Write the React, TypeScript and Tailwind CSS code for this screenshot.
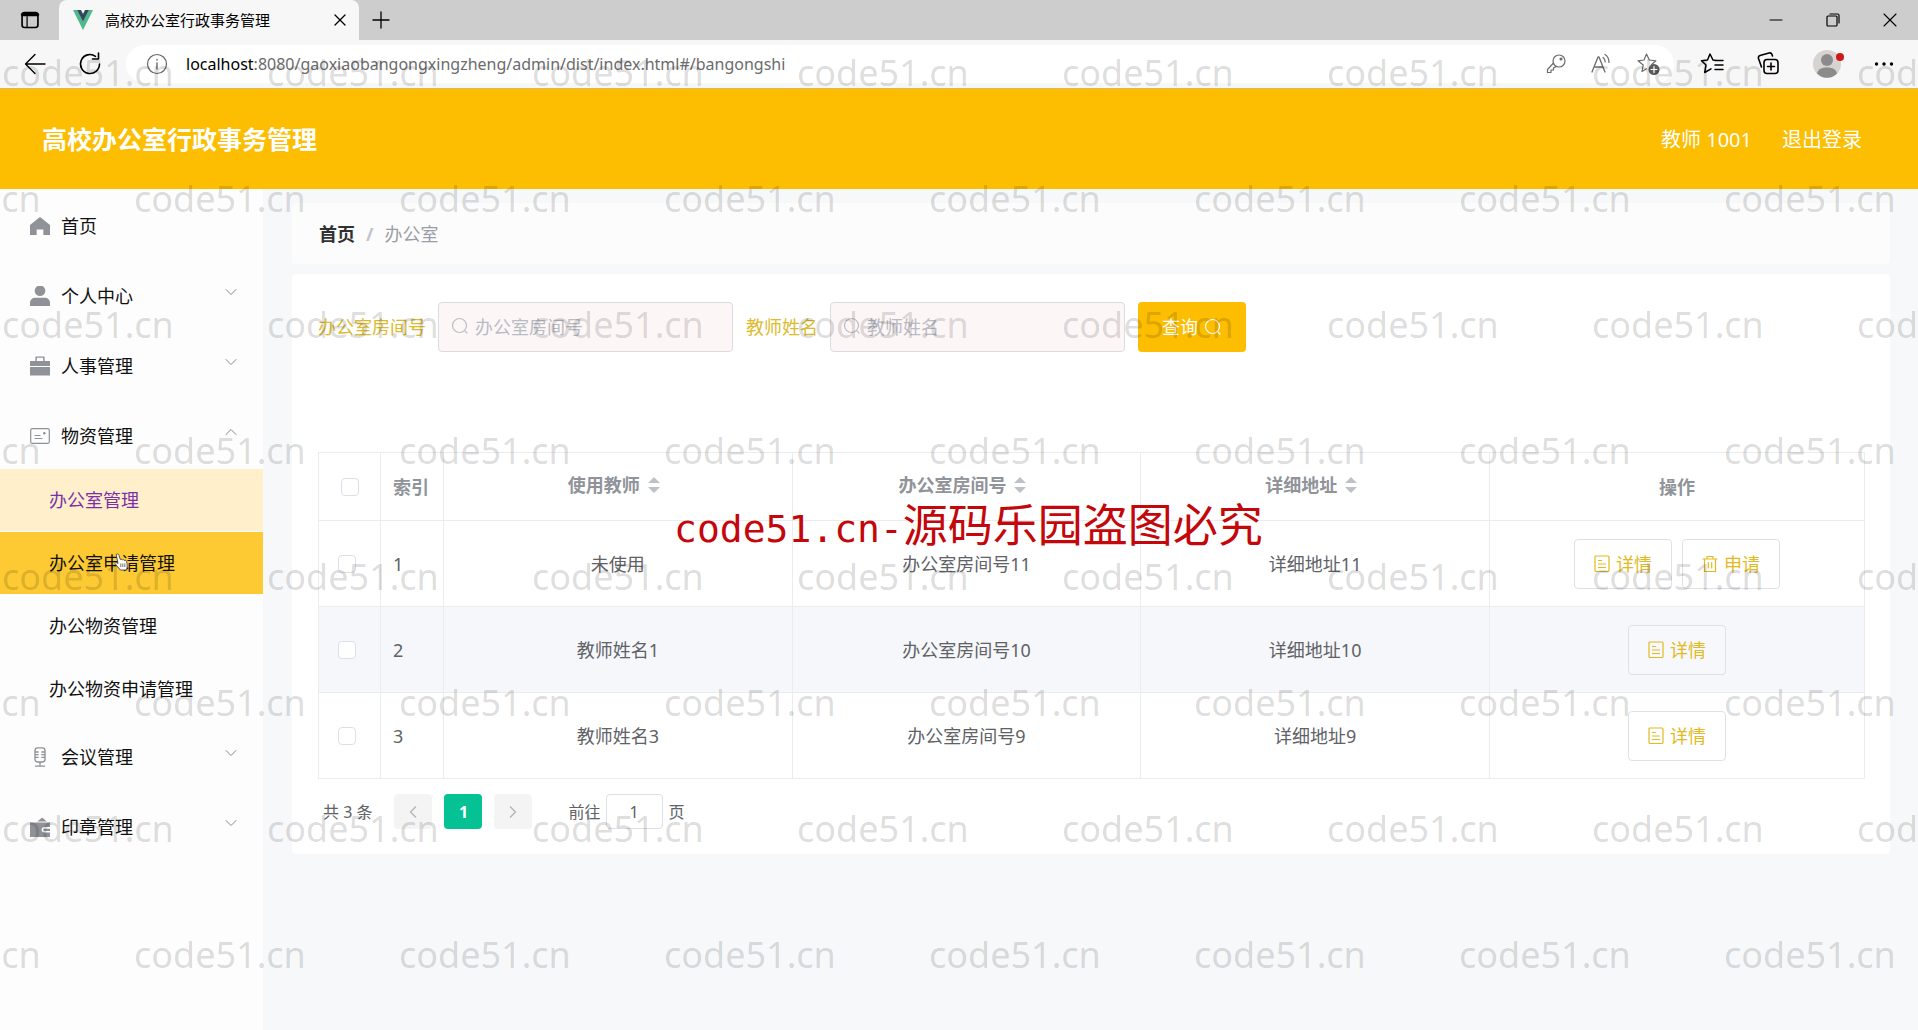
import type { ReactNode } from "react";

type IconProps = { className?: string };

const WATERMARK = "code51.cn";

function Svg({ className = "", children, box = "0 0 24 24" }: IconProps & { children: ReactNode; box?: string }) {
  return (
    <svg viewBox={box} className={className} fill="none" stroke="currentColor" strokeWidth="1.5" strokeLinecap="round" strokeLinejoin="round" aria-hidden="true">
      {children}
    </svg>
  );
}

const SearchIcon = ({ className }: IconProps) => (
  <Svg className={className} box="0 0 18 18">
    <circle cx="8.5" cy="8.5" r="7" strokeWidth="1.2" />
    <path d="M13.6 13.6 16 16" strokeWidth="1.2" />
  </Svg>
);

const Chevron = ({ className }: IconProps) => (
  <Svg className={className} box="0 0 12 12">
    <path d="m1 3.5 5 5 5-5" strokeWidth="1" />
  </Svg>
);

const PageArrow = ({ className }: IconProps) => (
  <Svg className={className} box="0 0 12 12">
    <path d="m1 3.5 5 5 5-5" strokeWidth="1.5" />
  </Svg>
);

const HomeIcon = ({ className }: IconProps) => (
  <Svg className={className} box="0 0 18 18">
    <path d="M9 .8 0 8v9.2h6v-5h6v5h6V8Z" fill="currentColor" stroke="none" />
  </Svg>
);

const UserIcon = ({ className }: IconProps) => (
  <Svg className={className} box="0 0 18 18">
    <g fill="currentColor" stroke="none">
      <circle cx="9" cy="4.3" r="4.8" />
      <path d="M0 18v-3a4.5 4.5 0 0 1 4.500-4.500h9A4.500 4.500 0 0 1 18 15v3Z" />
    </g>
  </Svg>
);

const CaseIcon = ({ className }: IconProps) => (
  <Svg className={className} box="0 0 18 18">
    <path d="M5.500 4V1h7v3" strokeWidth="1.300" />
    <path d="M0 4.500h18V9H0Zm0 5.500h18v7.500H0Z" fill="currentColor" stroke="none" />
  </Svg>
);

const CardIcon = ({ className }: IconProps) => (
  <Svg className={className} box="0 0 20 18">
    <rect x=".7" y="1.700" width="18.600" height="14.600" rx="1.500" strokeWidth="1.200" />
    <path d="M5 8.500h5M5 11.500h7" strokeWidth="1.200" />
    <circle cx="14.300" cy="6.300" r="1.300" fill="currentColor" stroke="none" />
  </Svg>
);

const MicIcon = ({ className }: IconProps) => (
  <Svg className={className} box="0 0 18 22">
    <rect x="3.500" y="1" width="11" height="15.500" rx="3" strokeWidth="1.500" />
    <path d="M4 5.500h3m4 0h3M4 8.500h3m4 0h3M4 11.500h3m4 0h3M9 17v3.500M4 21h10" strokeWidth="1.400" />
  </Svg>
);

const WalletIcon = ({ className }: IconProps) => (
  <Svg className={className} box="0 0 18 18">
    <path
      fillRule="evenodd"
      d="M0 5h18v4h-5a2.500 2.500 0 0 0 0 5h5v4H0ZM13 10.500h5v2h-5a1 1 0 0 1 0-2Z"
      fill="currentColor"
      stroke="none"
    />
    <path d="M6.500 4 11 .500 15 4Z" fill="currentColor" stroke="none" />
  </Svg>
);

const DocIcon = ({ className }: IconProps) => (
  <Svg className={className} box="0 0 16 18">
    <rect x="1" y="1" width="14" height="15.500" rx="1" strokeWidth="1.200" />
    <path d="M4.500 5.500h3M4.500 9h7M4.500 12.500h7" strokeWidth="1.200" />
  </Svg>
);

const TrashIcon = ({ className }: IconProps) => (
  <Svg className={className} box="0 0 16 18">
    <path d="M1 4h14M5 4V1.500h6V4M2.500 4v12.500h11V4M6.300 7.500v5.500M9.700 7.500v5.500" strokeWidth="1.200" />
  </Svg>
);

const VueLogo = ({ className }: IconProps) => (
  <svg viewBox="0 0 20 20" className={className} aria-hidden="true">
    <path d="M0 0h4l6 11 6-11h4L10 20Z" fill="#4fb98a" />
    <path d="M4 0h4l2 4 2-4h4L10 11.500Z" fill="#2f4a5c" />
  </svg>
);

const HandCursor = () => (
  <svg viewBox="0 0 14 18" className="pointer-events-none absolute left-[114px] top-[21px] h-[18px] w-[14px]" aria-hidden="true">
    <path
      d="M2.200 1.600C3.300.3 4.600 1 5 2.300L6.300 6.500c.9-.6 1.700-.3 2.100.4.900-.6 1.700-.2 2 .5 1.200-.4 1.900.2 2.200 1.200l.6 3c.3 1.900-.3 3.300-.5 5.400H6.300C4.800 14.500 2.500 12.800.8 10.400c.8-1.300 2.100-.9 3.300.2Z"
      fill="#fff"
      stroke="#333"
      strokeWidth=".8"
      strokeLinejoin="round"
    />
    <path d="M6.800 10.500v3.500M8.800 10.500v3.500M10.800 10.500v3.500" stroke="#333" strokeWidth=".7" />
  </svg>
);

function BrowserChrome() {
  return (
    <div className="text-black">
      <div className="flex h-10 items-stretch bg-[#cdcdcd]">
        <button aria-label="标签页操作" className="flex w-[59px] items-center justify-center rounded-br-lg">
          <Svg className="size-5">
            <rect x="2.500" y="3" width="19" height="18" rx="3" strokeWidth="2" />
            <path d="M3 5.500h18" strokeWidth="4" />
            <path d="M8.500 8v13" strokeWidth="1.500" />
          </Svg>
        </button>
        <div className="flex w-[300px] items-center rounded-t-lg bg-[#f7f7f7] pl-[14px] pr-2">
          <VueLogo className="h-5 w-5" />
          <span className="ml-3 text-[15px] leading-5">高校办公室行政事务管理</span>
          <button aria-label="关闭标签页" className="ml-auto p-1">
            <Svg className="size-[14px]" box="0 0 14 14">
              <path d="m2 2 10 10M12 2 2 12" strokeWidth="1.300" />
            </Svg>
          </button>
        </div>
        <button aria-label="新建标签页" className="flex w-11 items-center justify-center">
          <Svg className="size-[18px]" box="0 0 18 18">
            <path d="M9 1v16M1 9h16" strokeWidth="1.300" />
          </Svg>
        </button>
        <div className="ml-auto flex items-center">
          <button aria-label="最小化" className="flex w-[57px] justify-center">
            <Svg className="size-[14px]" box="0 0 14 14"><path d="M1 7h12" strokeWidth="1.200" /></Svg>
          </button>
          <button aria-label="还原" className="flex w-[57px] justify-center">
            <Svg className="size-[14px]" box="0 0 14 14">
              <rect x="1" y="3" width="10" height="10" rx="1" strokeWidth="1.200" />
              <path d="M4 1h7.500A1.500 1.500 0 0 1 13 2.500V10" strokeWidth="1.200" />
            </Svg>
          </button>
          <button aria-label="关闭" className="flex w-[57px] justify-center">
            <Svg className="size-[14px]" box="0 0 14 14"><path d="m1 1 12 12M13 1 1 13" strokeWidth="1.100" /></Svg>
          </button>
        </div>
      </div>
      <div className="flex h-12 items-center bg-[#f7f7f7]">
        <button aria-label="后退" className="ml-6">
          <Svg className="size-[22px]" box="0 0 22 22"><path d="M11 1.500 1.500 11l9.500 9.500M1.500 11H21" strokeWidth="1.400" /></Svg>
        </button>
        <button aria-label="刷新" className="ml-8">
          <Svg className="size-6"><path d="M21.500 12A9.500 9.500 0 1 1 17.500 4.300M20.500 1v6h-6" strokeWidth="1.600" /></Svg>
        </button>
        <div className="ml-6 flex h-[38px] min-w-0 flex-1 items-center rounded-full bg-white pl-5 pr-[14px]">
          <Svg className="size-[22px] shrink-0 text-[#666]" box="0 0 22 22">
            <circle cx="11" cy="11" r="9.500" strokeWidth="1.200" />
            <path d="M11 10v6M11 6.500v.5" strokeWidth="1.400" />
          </Svg>
          <p className="ml-[18px] flex-1 whitespace-nowrap text-base leading-6 text-[#6b6b6b]">
            <span className="text-black">localhost</span>:8080/gaoxiaobangongxingzheng/admin/dist/index.html#/bangongshi
          </p>
          <div className="flex items-center gap-6 text-[#6b6b6b]">
            <button aria-label="密码">
              <Svg className="size-5" box="0 0 20 20">
                <circle cx="13" cy="7" r="6" strokeWidth="1.200" />
                <circle cx="15" cy="5" r=".8" fill="currentColor" />
                <path d="M7.500 9 1.500 15.500v3h3.500v-2.500h2.500v-2l2.500-1.500" strokeWidth="1.200" />
              </Svg>
            </button>
            <button aria-label="朗读此页">
              <Svg className="size-[22px]" box="0 0 22 22">
                <path d="m2 19 6-15h1l6 15M4.300 14h8.400" strokeWidth="1.300" />
                <path d="M13 4.500c1.500 1 2.200 2.500 2.200 4.500M15 1.500c2.700 1.700 4 4.300 4 8" strokeWidth="1.200" />
              </Svg>
            </button>
            <button aria-label="收藏此页">
              <Svg className="size-6">
                <path d="m10.500 2 2.800 6 6.600.8-4.500 4M6 19.500l1.200-6.500L2 8.800l6-.8 2.500-6M6 19.500l4.500-2.700" strokeWidth="1.200" />
                <circle cx="18" cy="17.500" r="5.500" fill="#5c5c5c" stroke="none" />
                <path d="M18 14.500v6M15 17.500h6" stroke="#fff" strokeWidth="1.200" />
              </Svg>
            </button>
          </div>
        </div>
        <div className="flex items-center pl-[26px] pr-6">
          <button aria-label="收藏夹">
            <Svg className="size-6">
              <path d="M16.500 8.500 13 8 10 2 7.500 8l-6 .8L6 13l-1.300 7.500 6.300-3.700M15 8.500h8M15 13h8M15 17.500h8" strokeWidth="1.500" />
            </Svg>
          </button>
          <button aria-label="集锦" className="ml-8">
            <Svg className="size-6">
              <rect x="8" y="7.500" width="14" height="14" rx="3" strokeWidth="1.600" />
              <path d="M15 11v7M11.500 14.500h7M5.500 15 2.500 6.500a2.500 2.500 0 0 1 1.500-3l9-2.500a2.500 2.500 0 0 1 3 1.500l.5 1.500" strokeWidth="1.600" />
            </Svg>
          </button>
          <button aria-label="用户配置" className="relative ml-8">
            <svg viewBox="0 0 30 30" className="size-[30px]" aria-hidden="true">
              <circle cx="15" cy="15" r="14" fill="#d6d3d1" />
              <circle cx="15" cy="11" r="6" fill="#8b8b8b" />
              <path d="M5 24.500C6 20 10 18.500 15 18.500s9 1.500 10 6a14 14 0 0 1-20 0Z" fill="#8b8b8b" />
            </svg>
            <span className="absolute -right-0.5 top-1 size-2 rounded-full bg-[#d01818]" />
          </button>
          <button aria-label="设置及其他" className="ml-8">
            <svg viewBox="0 0 20 6" className="h-[6px] w-5" aria-hidden="true">
              <circle cx="2.500" cy="3" r="1.700" /><circle cx="10" cy="3" r="1.700" /><circle cx="17.500" cy="3" r="1.700" />
            </svg>
          </button>
        </div>
      </div>
    </div>
  );
}

const subItems = ["办公室管理", "办公室申请管理", "办公物资管理", "办公物资申请管理"];

const menu = [
  { label: "首页", Icon: HomeIcon },
  { label: "个人中心", Icon: UserIcon, fold: true },
  { label: "人事管理", Icon: CaseIcon, fold: true },
  { label: "物资管理", Icon: CardIcon, fold: true, open: true },
  { label: "会议管理", Icon: MicIcon, fold: true },
  { label: "印章管理", Icon: WalletIcon, fold: true },
];

function Sidebar() {
  return (
    <nav className="w-[263px] shrink-0 bg-[#fdfdfd] text-[18px] leading-6 text-[#111]">
      <ul className="flex flex-col gap-1 pt-1">
        {menu.map(({ label, Icon, fold, open }) => (
          <li key={label}>
            <button className="flex h-[66px] w-full items-center pl-[30px] pr-[26px]">
              <Icon className="h-5 w-5 text-[#8f9297]" />
              <span className="ml-[11px]">{label}</span>
              {fold && <Chevron className={open ? "mb-2 ml-auto size-3 rotate-180 text-[#888]" : "mb-2 ml-auto size-3 text-[#888]"} />}
            </button>
            {open && (
              <ul className="flex flex-col gap-px">
                {subItems.map((s, i) => (
                  <li key={s} className="relative">
                    <a
                      href="#/bangongshi"
                      className={
                        i === 0
                          ? "flex h-[62px] items-center bg-[#fff0cb] pl-[49px] text-[#7b2fa8]"
                          : i === 1
                            ? "flex h-[62px] items-center bg-[#fdca33] pl-[49px]"
                            : "flex h-[62px] items-center pl-[49px]"
                      }
                    >
                      {s}
                    </a>
                    {i === 1 && <HandCursor />}
                  </li>
                ))}
              </ul>
            )}
          </li>
        ))}
      </ul>
    </nav>
  );
}

function Field({ id, label }: { id: string; label: string }) {
  return (
    <div className="flex items-center">
      <label htmlFor={id} className="pr-3 text-[#dcbb2c]">{label}</label>
      <div className="relative">
        <SearchIcon className="absolute left-[13px] top-[15px] size-[18px] text-[#b9bcc4]" />
        <input
          id={id}
          placeholder={label}
          className="h-[50px] w-[295px] rounded border border-[#dcdbe0] bg-[#fdf6f7] pl-9 pr-4 placeholder:text-[#b9bcc4]"
        />
      </div>
    </div>
  );
}

function SortHeader({ label }: { label: string }) {
  return (
    <span className="inline-flex items-center gap-2 pb-1 pr-2">
      {label}
      <svg viewBox="0 0 12 16" className="h-4 w-3" fill="#bdc1c8" aria-hidden="true">
        <path d="M6 0 12 6H0ZM6 16 0 10h12Z" />
      </svg>
    </span>
  );
}

const rows = [
  { n: 1, teacher: "未使用", room: "办公室房间号11", address: "详细地址11", apply: true },
  { n: 2, teacher: "教师姓名1", room: "办公室房间号10", address: "详细地址10" },
  { n: 3, teacher: "教师姓名3", room: "办公室房间号9", address: "详细地址9" },
];

function ActionButton({ icon, children }: { icon: ReactNode; children: ReactNode }) {
  return (
    <button className="flex h-[50px] w-[98px] items-center justify-center gap-1.5 rounded border border-[#dfe1e8] bg-white/20 text-[#e3ba1e]">
      {icon}
      {children}
    </button>
  );
}

const box = "block size-[18px] appearance-none rounded-sm border border-[#dcdfe6] bg-white";
const cell = "border border-[#ebecef]";

function OfficeTable() {
  return (
    <table className="w-full table-fixed border-collapse text-center text-[#606266]">
      <colgroup>
        <col className="w-[62px]" />
        <col className="w-[63px]" />
        <col />
        <col />
        <col />
        <col className="w-[375px]" />
      </colgroup>
      <thead>
        <tr className="h-[68px] text-[#909399]">
          <th className={cell}><input type="checkbox" aria-label="全选" className={`${box} mx-auto`} /></th>
          <th className={`${cell} pl-3 text-left`}>索引</th>
          <th className={cell}><SortHeader label="使用教师" /></th>
          <th className={cell}><SortHeader label="办公室房间号" /></th>
          <th className={cell}><SortHeader label="详细地址" /></th>
          <th className={cell}>操作</th>
        </tr>
      </thead>
      <tbody>
        {rows.map((r) => (
          <tr key={r.n} className="h-[86px] even:bg-[#f5f7fa]">
            <td className={`${cell} pl-[19px]`}><input type="checkbox" aria-label={`选择第${r.n}行`} className={box} /></td>
            <td className={`${cell} pl-3 text-left`}>{r.n}</td>
            <td className={cell}>{r.teacher}</td>
            <td className={cell}>{r.room}</td>
            <td className={cell}>{r.address}</td>
            <td className={cell}>
              <div className="flex justify-center gap-[10px]">
                <ActionButton icon={<DocIcon className="h-[18px] w-4" />}>详情</ActionButton>
                {r.apply && <ActionButton icon={<TrashIcon className="h-[18px] w-4" />}>申请</ActionButton>}
              </div>
            </td>
          </tr>
        ))}
      </tbody>
    </table>
  );
}

function Pagination() {
  return (
    <div className="flex items-center pl-[5px] pt-[15px] text-base leading-6 text-[#606266]">
      <span>共 3 条</span>
      <button aria-label="上一页" className="ml-[22px] flex h-[35px] w-[38px] items-center justify-center rounded-sm bg-[#f4f4f5]">
        <PageArrow className="size-3 rotate-90 text-[#b4b7be]" />
      </button>
      <button className="ml-3 h-[35px] w-[38px] rounded-sm bg-[#05c295] font-bold text-white">1</button>
      <button aria-label="下一页" className="ml-3 flex h-[35px] w-[38px] items-center justify-center rounded-sm bg-[#f4f4f5]">
        <PageArrow className="size-3 -rotate-90 text-[#b4b7be]" />
      </button>
      <label htmlFor="page" className="ml-9">前往</label>
      <input id="page" defaultValue="1" className="ml-[5px] h-[35px] w-[57px] rounded border border-[#dcdfe6] bg-white text-center" />
      <span className="ml-1.5">页</span>
    </div>
  );
}

function Watermarks() {
  return (
    <div className="pointer-events-none absolute inset-0 overflow-hidden pt-[10px] text-[36px] leading-[126px] text-black/15" aria-hidden="true">
      {Array.from({ length: 8 }, (_, r) => (
        <div key={r} className={r % 2 ? "-ml-[131px] flex h-[126px]" : "ml-[2px] flex h-[126px]"}>
          {Array.from({ length: r % 2 ? 8 : 8 }, (_, c) => (
            <span key={c} className="w-[265px] shrink-0">{WATERMARK}</span>
          ))}
        </div>
      ))}
    </div>
  );
}

export default function App() {
  return (
    <div className="relative flex min-h-screen flex-col overflow-hidden bg-[#f6f8fa] font-['Noto_Sans','Noto_Sans_CJK_SC',sans-serif]">
      <BrowserChrome />
      <header className="flex h-[101px] items-center border-t border-[#d9b765] bg-[#fdbd00] pl-[42px] pr-14 text-white">
        <h1 className="text-[25px] font-bold leading-8">高校办公室行政事务管理</h1>
        <div className="ml-auto flex gap-[30px] pt-0.5 text-[20px] leading-7">
          <span>教师 1001</span>
          <a href="#/login">退出登录</a>
        </div>
      </header>
      <div className="flex flex-1">
        <Sidebar />
        <main className="min-w-0 flex-1 pl-[29px] pr-7 text-[18px] leading-6">
          <nav aria-label="面包屑" className="mt-3.5 flex h-[61px] items-center gap-[11px] rounded bg-[#fdfcfc] pl-[27px]">
            <a href="#/" className="font-bold text-[#303133]">首页</a>
            <span className="font-bold text-[#c0c4cc]">/</span>
            <span className="text-[#9a9da8]">办公室</span>
          </nav>
          <section className="mt-[10px] rounded bg-white pb-[25px] pl-[26px] pr-[25px] pt-7">
            <form className="mb-[100px] flex items-center gap-[13px]">
              <Field id="room" label="办公室房间号" />
              <Field id="teacher" label="教师姓名" />
              <button type="button" className="flex h-[50px] w-[108px] items-center justify-center gap-1.5 rounded bg-[#fdbd00] text-white">
                查询 <SearchIcon className="size-[18px]" />
              </button>
            </form>
            <OfficeTable />
            <Pagination />
          </section>
        </main>
      </div>
      <Watermarks />
      <p className="pointer-events-none absolute left-[674px] top-[495px] whitespace-nowrap text-[45px] leading-[60px] text-[#c4070b]">
        <span className="font-['DejaVu_Sans_Mono',monospace] text-[38px]">code51.cn-</span>源码乐园盗图必究
      </p>
    </div>
  );
}
